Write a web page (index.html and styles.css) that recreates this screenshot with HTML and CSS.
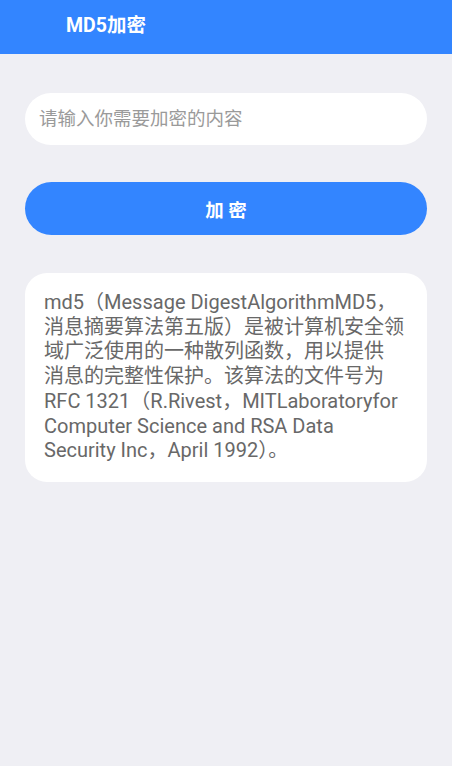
FILE: index.html
```html
<!DOCTYPE html>
<html lang="zh">
<head>
  <meta charset="UTF-8" />
  <meta name="viewport" content="width=device-width, initial-scale=1.0"/>
  <title>MD5加密</title>
  <link rel="stylesheet" href="styles.css">
</head>
<body>
  <header class="topbar">
    <h1>MD5加密</h1>
  </header>

  <main>
    <input class="field" type="text" placeholder="请输入你需要加密的内容">
    <button class="encrypt">加 密</button>

    <div class="card">
      <p>md5（Message DigestAlgorithmMD5，<br>消息摘要算法第五版）是被计算机安全领<br>域广泛使用的一种散列函数，用以提供<br>消息的完整性保护。该算法的文件号为<br>RFC 1321（R.Rivest，MITLaboratoryfor<br>Computer Science and RSA Data<br>Security Inc，April 1992）。</p>
    </div>
  </main>
</body>
</html>
```

FILE: styles.css
```css
body {
  margin: 0;
  font-family: Roboto, "Noto Sans CJK SC", sans-serif;
  background: #efeff4;
  min-height: 766px;
}

.topbar {
  height: 54px;
  background: #3385ff;
  display: flex;
  align-items: center;
  padding: 0 66px 8px;
  box-sizing: border-box;
}

.topbar h1 {
  margin: 0;
  font-size: 19.5px;
  font-weight: bold;
  color: #ffffff;
}

main {
  padding: 39px 25px 0;
  display: flex;
  flex-direction: column;
}

.field {
  height: 52px;
  border: none;
  border-radius: 26px;
  background: #ffffff;
  padding: 0 14px;
  font-family: inherit;
  font-size: 18.5px;
  color: #333;
  outline: none;
}

.field::placeholder {
  color: #9a9a9a;
}

.encrypt {
  margin-top: 37px;
  height: 53px;
  border: none;
  border-radius: 27px;
  background: #3385ff;
  color: #ffffff;
  font-family: inherit;
  font-size: 18.5px;
  font-weight: bold;
  cursor: pointer;
}

.card {
  margin-top: 38px;
  background: #ffffff;
  border-radius: 22px;
  padding: 17px 19px 19px;
}

.card p {
  margin: 0;
  font-size: 20px;
  line-height: 24.7px;
  color: #686868;
  white-space: nowrap;
}
```
